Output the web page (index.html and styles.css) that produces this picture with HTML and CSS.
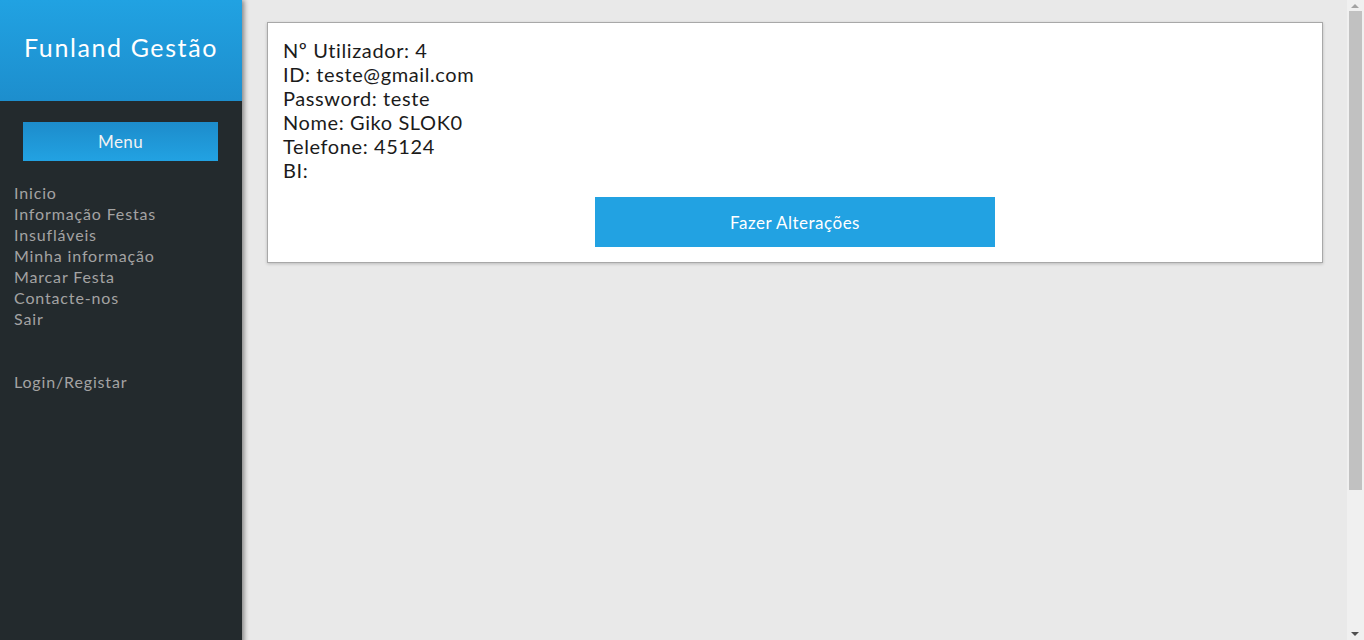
FILE: index.html
```html
<!DOCTYPE html>
<html lang="pt">
<head>
<meta charset="utf-8">
<title>Funland Gestão</title>
<link rel="stylesheet" href="styles.css">
</head>
<body>
<div class="layout">
  <aside class="sidebar">
    <header class="brand">Funland Gestão</header>
    <div class="menu-btn">Menu</div>
    <nav class="nav">
      <a href="#">Inicio</a>
      <a href="#">Informação Festas</a>
      <a href="#">Insufláveis</a>
      <a href="#">Minha informação</a>
      <a href="#">Marcar Festa</a>
      <a href="#">Contacte-nos</a>
      <a href="#">Sair</a>
    </nav>
    <nav class="nav nav-login">
      <a href="#">Login/Registar</a>
    </nav>
  </aside>
  <main class="main">
    <section class="card">
      <div class="info">
        <div>Nº Utilizador: 4</div>
        <div>ID: teste@gmail.com</div>
        <div>Password: teste</div>
        <div>Nome: Giko SLOK0</div>
        <div>Telefone: 45124</div>
        <div>BI:</div>
      </div>
      <div class="actions">
        <button class="btn">Fazer Alterações</button>
      </div>
    </section>
  </main>
</div>
<div class="scrollbar" aria-hidden="true">
  <span class="sb-arrow sb-up"></span>
  <span class="sb-thumb"></span>
  <span class="sb-arrow sb-down"></span>
</div>
</body>
</html>
```

FILE: styles.css
```css
html, body {
  margin: 0;
  padding: 0;
}
body {
  background: #e9e9e9;
  font-family: "Lato", "DejaVu Sans", sans-serif;
}
.layout {
  display: flex;
  min-height: 830px;
}
.sidebar {
  width: 242px;
  flex: 0 0 242px;
  background: #232a2d;
  box-shadow: 2px 0 5px rgba(0,0,0,0.45);
  position: relative;
  z-index: 1;
}
.brand {
  height: 93px;
  padding-bottom: 8px;
  display: flex;
  align-items: center;
  justify-content: center;
  color: #fff;
  font-size: 25px;
  letter-spacing: 1.6px;
  background: linear-gradient(#21a2e2, #1d8ecd);
}
.menu-btn {
  margin: 21px 24px 0 23px;
  height: 39px;
  display: flex;
  align-items: center;
  justify-content: center;
  color: #f2f2f2;
  font-size: 17px;
  letter-spacing: 0.4px;
  background: linear-gradient(#1d8ccb, #22a2e2);
}
.nav {
  display: flex;
  flex-direction: column;
  padding: 21px 14px 0;
}
.nav a {
  color: #a3a3a3;
  text-decoration: none;
  font-size: 16px;
  line-height: 21px;
  letter-spacing: 0.85px;
}
.nav-login {
  padding-top: 42px;
}
.main {
  flex: 1;
  padding: 22px 41px 0 25px;
}
.card {
  background: #fff;
  border: 1px solid #a8a8a8;
  box-shadow: 0 1px 3px rgba(0,0,0,0.2);
  padding: 15px 15px 15px 15px;
}
.info {
  color: #1b1b1b;
  font-size: 20px;
  line-height: 24px;
  letter-spacing: 0.6px;
}
.actions {
  display: flex;
  justify-content: center;
  margin-top: 15px;
}
.btn {
  width: 400px;
  height: 50px;
  border: none;
  background: #22a2e2;
  color: #fff;
  font-family: inherit;
  font-size: 17px;
  letter-spacing: 0.5px;
}
.scrollbar {
  position: fixed;
  top: 0;
  right: 0;
  width: 17px;
  height: 100vh;
  background: #f0f0f0;
  z-index: 5;
}
.sb-thumb {
  position: absolute;
  left: 2px;
  top: 11px;
  width: 13px;
  height: 479px;
  background: #c1c1c1;
}
.sb-arrow {
  position: absolute;
  left: 4px;
  width: 0;
  height: 0;
  border-left: 4px solid transparent;
  border-right: 4px solid transparent;
}
.sb-up {
  top: 4px;
  border-bottom: 4px solid #a3a3a3;
}
.sb-down {
  bottom: 4px;
  border-top: 4px solid #505050;
}
```
